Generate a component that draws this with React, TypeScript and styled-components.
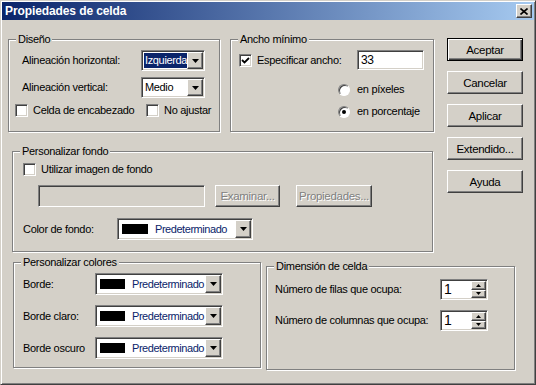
import styled, { createGlobalStyle } from "styled-components";

const GlobalStyle = createGlobalStyle`
  html, body {
    margin: 0;
    padding: 0;
    background: #d4d0c8;
  }
  body {
    font-family: "Liberation Sans", Arial, sans-serif;
    font-size: 11px;
    letter-spacing: -0.3px;
    color: #000;
  }
  * {
    box-sizing: border-box;
  }
`;

const Window = styled.div`
  width: 536px;
  height: 385px;
  background: #d4d0c8;
  border: 1px solid;
  border-color: #d4d0c8 #404040 #404040 #d4d0c8;
  box-shadow: inset 1px 1px #fff, inset -1px -1px #808080;
  padding: 1px;
  display: flex;
  flex-direction: column;
`;

const TitleBar = styled.div`
  height: 18px;
  display: flex;
  align-items: center;
  justify-content: space-between;
  padding: 0 2px 0 3px;
  background: linear-gradient(to right, #0a246a, #a6caf0);
`;

const TitleText = styled.span`
  color: #fff;
  font-weight: bold;
  font-size: 12px;
  letter-spacing: -0.1px;
  line-height: 18px;
`;

const raised = `
  background: #d4d0c8;
  border: 1px solid;
  border-color: #fff #404040 #404040 #fff;
  box-shadow: inset -1px -1px #808080;
`;

const sunken = `
  border: 1px solid;
  border-color: #808080 #fff #fff #808080;
  box-shadow: inset 1px 1px #404040, inset -1px -1px #d4d0c8;
`;

const CloseButton = styled.div`
  ${raised}
  width: 16px;
  height: 14px;
  display: flex;
  align-items: center;
  justify-content: center;
`;

const Client = styled.div`
  flex: 1;
  display: flex;
  flex-direction: column;
`;

const TopArea = styled.div`
  display: flex;
  padding-top: 19px;
`;

const LeftStack = styled.div`
  width: 432px;
  display: flex;
  flex-direction: column;
`;

const GroupRow = styled.div<{ $mt?: number }>`
  display: flex;
  align-items: flex-start;
  margin-top: ${(p) => p.$mt ?? 0}px;
`;

const Group = styled.div<{
  $w: number;
  $h: number;
  $ml?: number;
  $mt?: number;
  $pt?: number;
  $gap?: number;
}>`
  position: relative;
  width: ${(p) => p.$w}px;
  height: ${(p) => p.$h}px;
  margin-left: ${(p) => p.$ml ?? 0}px;
  margin-top: ${(p) => p.$mt ?? 0}px;
  padding-top: ${(p) => p.$pt ?? 10}px;
  border: 1px solid #808080;
  box-shadow: inset 1px 1px #fff, 1px 1px #fff;
  display: flex;
  flex-direction: column;
  gap: ${(p) => p.$gap ?? 0}px;
`;

const Caption = styled.span`
  position: absolute;
  top: -7px;
  left: 7px;
  padding: 0 2px;
  line-height: 13px;
  background: #d4d0c8;
`;

const Row = styled.div<{ $pl?: number; $mt?: number }>`
  display: flex;
  align-items: center;
  padding-left: ${(p) => p.$pl ?? 0}px;
  margin-top: ${(p) => p.$mt ?? 0}px;
`;

const Label = styled.span<{ $w?: number }>`
  width: ${(p) => (p.$w ? `${p.$w}px` : "auto")};
  flex-shrink: 0;
  line-height: 13px;
  white-space: nowrap;
`;

const Combo = styled.div<{ $w: number; $h: number }>`
  ${sunken}
  width: ${(p) => p.$w}px;
  height: ${(p) => p.$h}px;
  padding: 1px;
  background: #fff;
  display: flex;
  align-items: stretch;
`;

const ComboValue = styled.div<{ $selected?: boolean }>`
  flex: 1;
  min-width: 0;
  display: flex;
  align-items: center;
  padding: 1px 2px 1px 1px;
  span {
    flex: ${(p) => (p.$selected ? 1 : "none")};
    padding-left: 1px;
    line-height: 15px;
    font-size: 11px;
    letter-spacing: -0.35px;
    white-space: nowrap;
    background: ${(p) => (p.$selected ? "#0a246a" : "transparent")};
    color: ${(p) => (p.$selected ? "#fff" : "#000")};
  }
`;

const ColorValue = styled.div`
  flex: 1;
  min-width: 0;
  white-space: nowrap;
  display: flex;
  align-items: center;
  gap: 7px;
  padding-left: 3px;
  color: #0a246a;
  font-size: 11px;
  letter-spacing: -0.45px;
`;

const Swatch = styled.span<{ $w: number; $h: number }>`
  width: ${(p) => p.$w}px;
  height: ${(p) => p.$h}px;
  flex-shrink: 0;
  background: #000;
`;

const DropButton = styled.div`
  ${raised}
  width: 16px;
  flex-shrink: 0;
  display: flex;
  align-items: center;
  justify-content: center;
`;

const CheckBox = styled.span`
  ${sunken}
  width: 13px;
  height: 13px;
  flex-shrink: 0;
  background: #fff;
  display: flex;
  align-items: center;
  justify-content: center;
`;

const CheckItem = styled.div<{ $w?: number }>`
  display: flex;
  align-items: center;
  gap: 5px;
  width: ${(p) => (p.$w ? `${p.$w}px` : "auto")};
  flex-shrink: 0;
`;

const RadioItem = styled.div<{ $mt?: number }>`
  display: flex;
  align-items: center;
  gap: 7px;
  height: 13px;
  padding-left: 107px;
  margin-top: ${(p) => p.$mt ?? 0}px;
`;

const RadioDot = styled.span<{ $checked?: boolean }>`
  width: 12px;
  height: 12px;
  border-radius: 50%;
  border: 1px solid;
  border-color: #808080 #fff #fff #808080;
  box-shadow: inset 1px 1px #404040;
  background: #fff;
  display: flex;
  align-items: center;
  justify-content: center;
  &::after {
    content: "";
    width: 4px;
    height: 4px;
    border-radius: 50%;
    background: ${(p) => (p.$checked ? "#000" : "transparent")};
  }
`;

const TextField = styled.div<{ $w: number; $h: number; $disabled?: boolean }>`
  ${sunken}
  width: ${(p) => p.$w}px;
  height: ${(p) => p.$h}px;
  padding: 0 3px;
  display: flex;
  align-items: center;
  font-size: 12px;
  background: ${(p) => (p.$disabled ? "#d4d0c8" : "#fff")};
`;

const PushButton = styled.div<{
  $w: number;
  $h: number;
  $default?: boolean;
  $disabled?: boolean;
  $ml?: number;
}>`
  width: ${(p) => p.$w}px;
  height: ${(p) => p.$h}px;
  margin-left: ${(p) => p.$ml ?? 0}px;
  background: #d4d0c8;
  border: 1px solid;
  border-color: ${(p) =>
    p.$default ? "#000" : "#fff #404040 #404040 #fff"};
  box-shadow: ${(p) =>
    p.$default
      ? "inset 1px 1px #fff, inset -1px -1px #404040, inset -2px -2px #808080"
      : "inset -1px -1px #808080"};
  display: flex;
  align-items: center;
  justify-content: center;
  font-size: 11.5px;
  color: ${(p) => (p.$disabled ? "#808080" : "#000")};
  text-shadow: ${(p) => (p.$disabled ? "1px 1px #fff" : "none")};
`;

const ButtonColumn = styled.div`
  display: flex;
  flex-direction: column;
  gap: 10px;
  margin-left: 13px;
  margin-top: -1px;
`;

const Spin = styled.div`
  ${sunken}
  width: 48px;
  height: 21px;
  padding: 1px;
  background: #fff;
  display: flex;
`;

const SpinValue = styled.div`
  flex: 1;
  padding-left: 2px;
  font-size: 14px;
  line-height: 17px;
`;

const SpinButtons = styled.div`
  width: 15px;
  display: flex;
  flex-direction: column;
`;

const SpinButton = styled.div`
  ${raised}
  flex: 1;
  display: flex;
  align-items: center;
  justify-content: center;
`;

const Arrow = ({ up, small }: { up?: boolean; small?: boolean }) => {
  const w = small ? 5 : 7;
  const h = small ? 3 : 4;
  const points = up
    ? `0,${h} ${w},${h} ${w / 2},0`
    : `0,0 ${w},0 ${w / 2},${h}`;
  return (
    <svg width={w} height={h} viewBox={`0 0 ${w} ${h}`}>
      <polygon points={points} fill="#000" />
    </svg>
  );
};

const Check = ({ checked }: { checked?: boolean }) => (
  <CheckBox>
    {checked && (
      <svg width="9" height="9" viewBox="0 0 9 9">
        <polyline
          points="1,4 3.5,6.5 8,2"
          fill="none"
          stroke="#000"
          strokeWidth="1.8"
        />
      </svg>
    )}
  </CheckBox>
);

const ColorCombo = ({ w, sw }: { w: number; sw: number }) => (
  <Combo $w={w} $h={22}>
    <ColorValue>
      <Swatch $w={sw} $h={10} />
      Predeterminado
    </ColorValue>
    <DropButton>
      <Arrow />
    </DropButton>
  </Combo>
);

const SpinBox = ({ value }: { value: string }) => (
  <Spin>
    <SpinValue>{value}</SpinValue>
    <SpinButtons>
      <SpinButton>
        <Arrow up small />
      </SpinButton>
      <SpinButton>
        <Arrow small />
      </SpinButton>
    </SpinButtons>
  </Spin>
);

export default function App() {
  return (
    <>
      <GlobalStyle />
      <Window>
        <TitleBar>
          <TitleText>Propiedades de celda</TitleText>
          <CloseButton>
            <svg width="8" height="7" viewBox="0 0 8 7">
              <path
                d="M0.5 0.5 L7.5 6.5 M7.5 0.5 L0.5 6.5"
                stroke="#000"
                strokeWidth="1.6"
              />
            </svg>
          </CloseButton>
        </TitleBar>
        <Client>
          <TopArea>
            <LeftStack>
              <GroupRow>
                <Group $w={212} $h={93} $ml={6}>
                  <Caption>Diseño</Caption>
                  <Row $pl={13}>
                    <Label $w={119}>Alineación horizontal:</Label>
                    <Combo $w={64} $h={21}>
                      <ComboValue $selected>
                        <span>Izquierda</span>
                      </ComboValue>
                      <DropButton>
                        <Arrow />
                      </DropButton>
                    </Combo>
                  </Row>
                  <Row $pl={13} $mt={6}>
                    <Label $w={119}>Alineación vertical:</Label>
                    <Combo $w={64} $h={21}>
                      <ComboValue>
                        <span>Medio</span>
                      </ComboValue>
                      <DropButton>
                        <Arrow />
                      </DropButton>
                    </Combo>
                  </Row>
                  <Row $pl={6} $mt={6}>
                    <CheckItem $w={131}>
                      <Check />
                      <Label>Celda de encabezado</Label>
                    </CheckItem>
                    <CheckItem>
                      <Check />
                      <Label>No ajustar</Label>
                    </CheckItem>
                  </Row>
                </Group>
                <Group $w={204} $h={93} $ml={10}>
                  <Caption>Ancho mínimo</Caption>
                  <Row $pl={8}>
                    <CheckItem $w={118}>
                      <Check checked />
                      <Label>Especificar ancho:</Label>
                    </CheckItem>
                    <TextField $w={67} $h={20}>
                      33
                    </TextField>
                  </Row>
                  <RadioItem $mt={13}>
                    <RadioDot />
                    <Label>en píxeles</Label>
                  </RadioItem>
                  <RadioItem $mt={9}>
                    <RadioDot $checked />
                    <Label>en porcentaje</Label>
                  </RadioItem>
                </Group>
              </GroupRow>
              <Group $w={421} $h={101} $ml={10} $mt={19} $pt={11}>
                <Caption>Personalizar fondo</Caption>
                <Row $pl={10}>
                  <CheckItem>
                    <Check />
                    <Label>Utilizar imagen de fondo</Label>
                  </CheckItem>
                </Row>
                <Row $pl={25} $mt={9}>
                  <TextField $w={167} $h={22} $disabled />
                  <PushButton $w={65} $h={22} $ml={10} $disabled>
                    Examinar...
                  </PushButton>
                  <PushButton $w={76} $h={22} $ml={16} $disabled>
                    Propiedades...
                  </PushButton>
                </Row>
                <Row $pl={10} $mt={11}>
                  <Label $w={94}>Color de fondo:</Label>
                  <ColorCombo w={136} sw={26} />
                </Row>
              </Group>
            </LeftStack>
            <ButtonColumn>
              <PushButton $w={76} $h={23} $default>
                Aceptar
              </PushButton>
              <PushButton $w={76} $h={23}>
                Cancelar
              </PushButton>
              <PushButton $w={76} $h={23}>
                Aplicar
              </PushButton>
              <PushButton $w={76} $h={23}>
                Extendido...
              </PushButton>
              <PushButton $w={76} $h={23}>
                Ayuda
              </PushButton>
            </ButtonColumn>
          </TopArea>
          <GroupRow $mt={10}>
            <Group $w={248} $h={106} $ml={11} $gap={10}>
              <Caption>Personalizar colores</Caption>
              <Row $pl={9}>
                <Label $w={72}>Borde:</Label>
                <ColorCombo w={128} sw={25} />
              </Row>
              <Row $pl={9}>
                <Label $w={72}>Borde claro:</Label>
                <ColorCombo w={128} sw={25} />
              </Row>
              <Row $pl={9}>
                <Label $w={72}>Borde oscuro</Label>
                <ColorCombo w={128} sw={25} />
              </Row>
            </Group>
            <Group $w={249} $h={104} $ml={5} $mt={4} $pt={12} $gap={10}>
              <Caption>Dimensión de celda</Caption>
              <Row $pl={8}>
                <Label $w={165}>Número de filas que ocupa:</Label>
                <SpinBox value="1" />
              </Row>
              <Row $pl={8}>
                <Label $w={165}>Número de columnas que ocupa:</Label>
                <SpinBox value="1" />
              </Row>
            </Group>
          </GroupRow>
        </Client>
      </Window>
    </>
  );
}
